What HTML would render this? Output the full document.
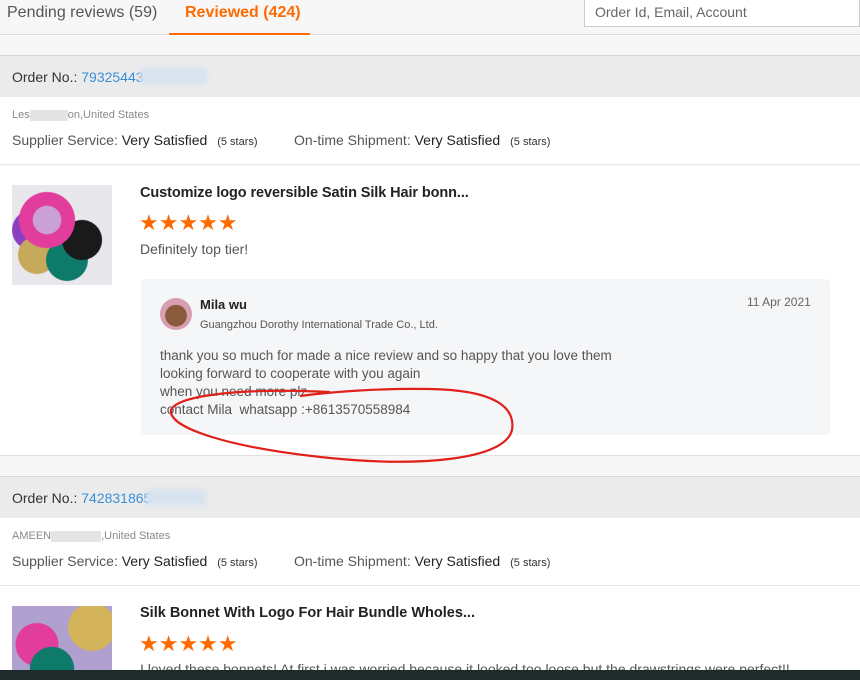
<!DOCTYPE html>
<html><head><style>
*{margin:0;padding:0;box-sizing:border-box}
body{width:860px;height:680px;overflow:hidden;background:#fff;font-family:"Liberation Sans",Arial,sans-serif;color:#333;position:relative}
.a{position:absolute}
.tabs{left:0;top:0;width:860px;height:35px;background:#f7f7f7;border-bottom:1px solid #ddd}
.gap{background:#f7f7f7}
.hdr{background:#ebebeb;border-top:1px solid #d8d8d8;font-size:14px;color:#333}
.blue{color:#3a8fd8}
.blur{background:#d7e3ef;filter:blur(2px)}
.s{font-size:14px;color:#555}
.s b{font-weight:normal;color:#222}
.s small{font-size:11px;color:#333;margin-left:6px}
.star{color:#ff6a00;font-size:22px;letter-spacing:0px}
</style></head><body>
<div class="a tabs"></div>
<div class="a" style="left:7px;top:4px;font-size:16px;color:#555">Pending reviews (59)</div>
<div class="a" style="left:185px;top:4px;font-size:16px;color:#ff6a00;font-weight:bold">Reviewed (424)</div>
<div class="a" style="left:169px;top:33px;width:141px;height:2px;background:#ff6a00"></div>
<div class="a" style="left:584px;top:0;width:276px;height:27px;background:#fff;border:1px solid #ccc;border-top:none;font-size:14px;color:#666;padding:4px 10px">Order Id, Email, Account</div>
<div class="a gap" style="left:0;top:36px;width:860px;height:20px"></div>

<div class="a hdr" style="left:0;top:55px;width:860px;height:42px;padding:13px 12px">Order No.: <span class="blue">79325443</span></div>
<div class="a blur" style="left:140px;top:68px;width:67px;height:16px"></div>
<div class="a" style="left:12px;top:109px;font-size:11px;color:#888">Les<span style="display:inline-block;width:38px;height:11px;background:#e4e4e4;vertical-align:middle"></span>on,United States</div>
<div class="a s" style="left:12px;top:132px">Supplier Service: <b>Very Satisfied</b> <small>(5 stars)</small></div>
<div class="a s" style="left:294px;top:132px">On-time Shipment: <b>Very Satisfied</b> <small>(5 stars)</small></div>
<div class="a" style="left:0;top:164px;width:860px;height:1px;background:#e6e6e6"></div>

<div class="a" style="left:12px;top:185px;width:100px;height:100px;background:radial-gradient(circle at 35% 35%,#c9a0d8 0 15%,#e23d9c 16% 30%,transparent 31%),radial-gradient(circle at 70% 55%,#1a1a1a 0 22%,transparent 23%),radial-gradient(circle at 55% 75%,#0e7a6a 0 22%,transparent 23%),radial-gradient(circle at 25% 70%,#c6a95a 0 18%,transparent 19%),radial-gradient(circle at 20% 45%,#8a3fc0 0 20%,transparent 21%),#e8e8ec"></div>
<div class="a" style="left:140px;top:185px;font-size:14.5px;font-weight:bold;color:#222;letter-spacing:-0.1px">Customize logo reversible Satin Silk Hair bonn...</div>
<div class="a star" style="left:139px;top:210px">★★★★★</div>
<div class="a" style="left:140px;top:241px;font-size:14px;color:#555">Definitely top tier!</div>

<div class="a" style="left:141px;top:279px;width:689px;height:156px;background:#f5f6f8;border-radius:4px"></div>
<div class="a" style="left:160px;top:298px;width:32px;height:32px;border-radius:50%;background:radial-gradient(circle at 50% 55%,#8a5a3c 0 45%,#d7a0b0 46%)"></div>
<div class="a" style="left:200px;top:297px;font-size:13px;font-weight:bold;color:#222">Mila wu</div>
<div class="a" style="left:200px;top:319px;font-size:11px;color:#555">Guangzhou Dorothy International Trade Co., Ltd.</div>
<div class="a" style="left:747px;top:295px;font-size:12px;color:#666">11 Apr 2021</div>
<div class="a" style="left:160px;top:347px;font-size:13.5px;color:#555;line-height:18px">thank you so much for made a nice review and so happy that you love them<br>looking forward to cooperate with you again<br>when you need more plz<br>contact Mila&nbsp; whatsapp :+8613570558984</div>

<div class="a" style="left:0;top:455px;width:860px;height:1px;background:#e0e0e0"></div>
<div class="a gap" style="left:0;top:456px;width:860px;height:21px"></div>
<div class="a hdr" style="left:0;top:476px;width:860px;height:42px;padding:13px 12px">Order No.: <span class="blue">742831865</span></div>
<div class="a blur" style="left:146px;top:489px;width:60px;height:16px"></div>
<div class="a" style="left:12px;top:530px;font-size:11px;color:#888">AMEEN<span style="display:inline-block;width:50px;height:11px;background:#e4e4e4;vertical-align:middle"></span>,United States</div>
<div class="a s" style="left:12px;top:553px">Supplier Service: <b>Very Satisfied</b> <small>(5 stars)</small></div>
<div class="a s" style="left:294px;top:553px">On-time Shipment: <b>Very Satisfied</b> <small>(5 stars)</small></div>
<div class="a" style="left:0;top:585px;width:860px;height:1px;background:#e6e6e6"></div>
<div class="a" style="left:12px;top:606px;width:100px;height:70px;background:radial-gradient(circle at 80% 30%,#d4b45a 0 25%,transparent 26%),radial-gradient(circle at 40% 90%,#0e7a6a 0 25%,transparent 26%),radial-gradient(circle at 25% 55%,#e23d9c 0 25%,transparent 26%),#b0a0d0"></div>
<div class="a" style="left:140px;top:605px;font-size:14.5px;font-weight:bold;color:#222">Silk Bonnet With Logo For Hair Bundle Wholes...</div>
<div class="a star" style="left:139px;top:631px">★★★★★</div>
<div class="a" style="left:140px;top:661px;font-size:14px;color:#555">I loved these bonnets! At first i was worried because it looked too loose but the drawstrings were perfect!!</div>
<div class="a" style="left:0;top:670px;width:860px;height:10px;background:#1f2a2a"></div>
<svg class="a" style="left:0;top:0" width="860" height="680"><path d="M330 392 C250 388,178 394,171 410 C168 428,230 448,330 458 C420 467,505 460,512 430 C516 405,490 390,430 389 C380 388,330 392,300 396" fill="none" stroke="#e0201a" stroke-width="2.2"/></svg>
</body></html>
